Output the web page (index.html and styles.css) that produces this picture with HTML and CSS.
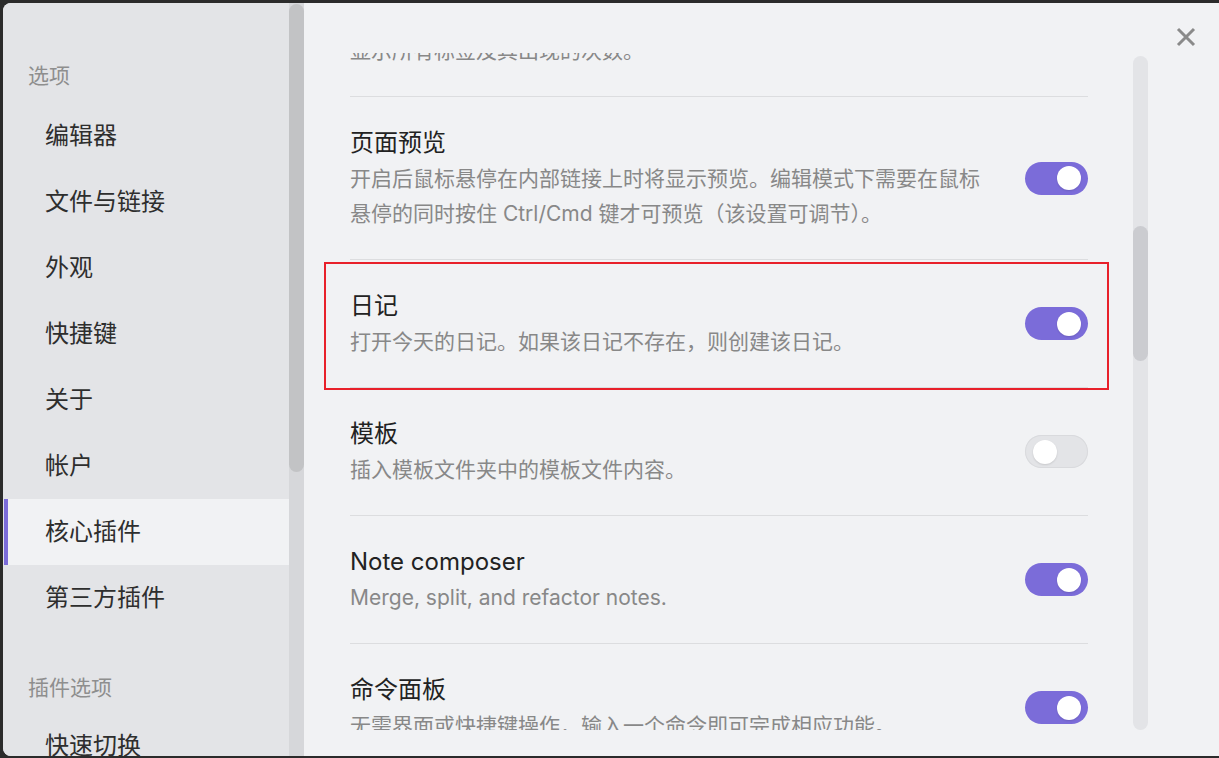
FILE: index.html
```html
<!DOCTYPE html>
<html lang="zh-CN">
<head>
<meta charset="utf-8">
<title>设置</title>
<link rel="stylesheet" href="styles.css">
</head>
<body>
<div class="modal">
  <aside class="sidebar">
    <nav class="side-list">
      <div class="side-heading first">选项</div>
      <div class="side-item">编辑器</div>
      <div class="side-item">文件与链接</div>
      <div class="side-item">外观</div>
      <div class="side-item">快捷键</div>
      <div class="side-item">关于</div>
      <div class="side-item">帐户</div>
      <div class="side-item active">核心插件</div>
      <div class="side-item">第三方插件</div>
      <div class="side-heading second">插件选项</div>
      <div class="side-item">快速切换</div>
    </nav>
    <div class="side-scroll"><div class="side-thumb"></div></div>
  </aside>
  <main class="main">
    <div class="content">
      <div class="list">
        <div class="setting">
          <div class="info">
            <div class="name">标签面板</div>
            <div class="desc">显示所有标签及其出现的次数。</div>
          </div>
          <div class="toggle on"><span class="knob"></span></div>
        </div>
        <div class="setting">
          <div class="info">
            <div class="name">页面预览</div>
            <div class="desc">开启后鼠标悬停在内部链接上时将显示预览。编辑模式下需要在鼠标悬停的同时按住 Ctrl/Cmd 键才可预览（该设置可调节）。</div>
          </div>
          <div class="toggle on"><span class="knob"></span></div>
        </div>
        <div class="setting highlighted">
          <div class="info">
            <div class="name">日记</div>
            <div class="desc">打开今天的日记。如果该日记不存在，则创建该日记。</div>
          </div>
          <div class="toggle on"><span class="knob"></span></div>
          <div class="mark"></div>
        </div>
        <div class="setting">
          <div class="info">
            <div class="name">模板</div>
            <div class="desc">插入模板文件夹中的模板文件内容。</div>
          </div>
          <div class="toggle"><span class="knob"></span></div>
        </div>
        <div class="setting">
          <div class="info">
            <div class="name">Note composer</div>
            <div class="desc">Merge, split, and refactor notes.</div>
          </div>
          <div class="toggle on"><span class="knob"></span></div>
        </div>
        <div class="setting">
          <div class="info">
            <div class="name">命令面板</div>
            <div class="desc">无需界面或快捷键操作，输入一个命令即可完成相应功能。</div>
          </div>
          <div class="toggle on"><span class="knob"></span></div>
        </div>
      </div>
    </div>
    <div class="vscroll"><div class="vthumb"></div></div>
    <button class="close" aria-label="关闭">
      <svg width="20" height="20" viewBox="0 0 20 20"><path d="M2 2 L18 18 M18 2 L2 18" stroke="#8a8a8a" stroke-width="3" stroke-linecap="butt"/></svg>
    </button>
  </main>
</div>
</body>
</html>
```

FILE: styles.css
```css
html, body {
  margin: 0;
  padding: 0;
  height: 758px;
  overflow: hidden;
  background: #2b2b2b;
  font-family: Inter, "Noto Sans CJK SC", sans-serif;
}

.modal {
  margin: 3px 0 0 3px;
  height: 753px;
  display: flex;
  border-radius: 8px 0 0 8px;
  overflow: hidden;
  background: #f1f2f4;
}

.sidebar {
  width: 301px;
  flex: none;
  display: flex;
  background: #e3e4e7;
}

.side-list {
  flex: 1;
  padding-left: 1px;
  padding-top: 57px;
}

.side-heading {
  height: 32px;
  line-height: 32px;
  padding-left: 24px;
  font-size: 21px;
  color: #8e8e8e;
}

.side-heading.first { margin-bottom: 11px; }
.side-heading.second { margin-top: 41px; margin-bottom: 9px; }

.side-item {
  height: 66px;
  line-height: 66px;
  border-left: 4px solid transparent;
  padding-left: 37px;
  font-size: 24px;
  color: #2e2e2e;
}

.side-item.active {
  background: #f1f2f4;
  border-left-color: #7b6cd9;
}

.side-scroll {
  width: 15px;
  flex: none;
  background: #d6d7da;
}

.side-thumb {
  margin-top: 1px;
  height: 468px;
  border-radius: 8px;
  background: #c2c3c5;
}

.main {
  flex: 1;
  position: relative;
  display: flex;
}

.content {
  width: 738px;
  margin-left: 20px;
  padding: 0 21px 0 26px;
  margin-top: 50px;
  height: 677px;
  overflow: hidden;
  flex: none;
}

.list {
  margin-top: -84px;
}

.setting {
  position: relative;
  display: flex;
  align-items: center;
  padding: 28px 0;
  border-bottom: 1px solid #dcdddf;
}

.info {
  flex: 1;
  padding-right: 40px;
}

.name {
  font-size: 24px;
  line-height: 36px;
  color: #222;
}

.desc {
  font-size: 21px;
  line-height: 35px;
  color: #888;
}

.toggle {
  flex: none;
  position: relative;
  width: 63px;
  height: 33px;
  border-radius: 17px;
  background: #e3e4e7;
  box-shadow: inset 0 0 0 1px #d9dadd;
}

.toggle.on {
  background: #7b6cd9;
  box-shadow: none;
}

.knob {
  position: absolute;
  top: 4.5px;
  left: 8px;
  width: 24px;
  height: 24px;
  border-radius: 50%;
  background: #fff;
  box-shadow: 0 1px 2px rgba(0, 0, 0, 0.12);
}

.toggle.on .knob {
  left: auto;
  right: 7px;
}

.mark {
  position: absolute;
  top: 2px;
  left: -26px;
  right: -21px;
  bottom: -3px;
  border: 2px solid #e8202a;
  pointer-events: none;
}

.vscroll {
  width: 15px;
  flex: none;
  margin-left: 24px;
  margin-top: 53px;
  height: 674px;
  border-radius: 8px;
  background: #e3e4e7;
}

.vthumb {
  margin-top: 170px;
  height: 135px;
  border-radius: 8px;
  background: #cbccd0;
}

.close {
  position: absolute;
  top: 24px;
  right: 23px;
  width: 20px;
  height: 20px;
  padding: 0;
  border: 0;
  background: none;
}

.close svg { display: block; }
```
